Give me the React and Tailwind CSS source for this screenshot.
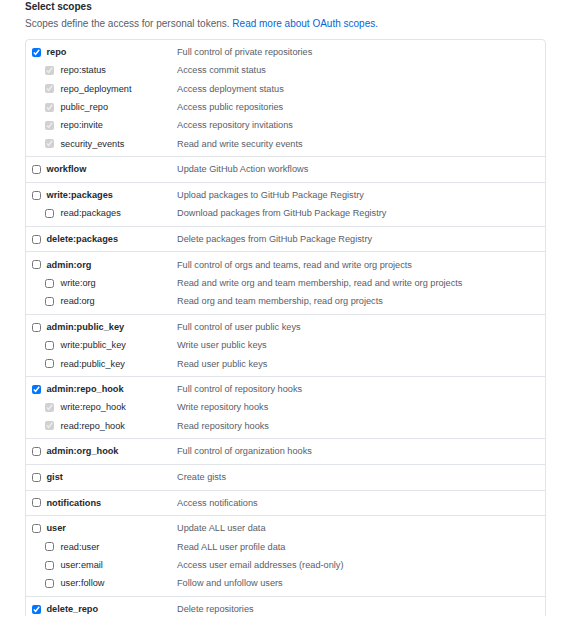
import React from "react";

const groups = [
  {
    main: { name: "repo", desc: "Full control of private repositories", checked: true },
    subs: [
      { name: "repo:status", desc: "Access commit status" },
      { name: "repo_deployment", desc: "Access deployment status" },
      { name: "public_repo", desc: "Access public repositories" },
      { name: "repo:invite", desc: "Access repository invitations" },
      { name: "security_events", desc: "Read and write security events" },
    ],
  },
  { main: { name: "workflow", desc: "Update GitHub Action workflows" }, subs: [] },
  {
    main: { name: "write:packages", desc: "Upload packages to GitHub Package Registry" },
    subs: [{ name: "read:packages", desc: "Download packages from GitHub Package Registry" }],
  },
  { main: { name: "delete:packages", desc: "Delete packages from GitHub Package Registry" }, subs: [] },
  {
    main: { name: "admin:org", desc: "Full control of orgs and teams, read and write org projects" },
    subs: [
      { name: "write:org", desc: "Read and write org and team membership, read and write org projects" },
      { name: "read:org", desc: "Read org and team membership, read org projects" },
    ],
  },
  {
    main: { name: "admin:public_key", desc: "Full control of user public keys" },
    subs: [
      { name: "write:public_key", desc: "Write user public keys" },
      { name: "read:public_key", desc: "Read user public keys" },
    ],
  },
  {
    main: { name: "admin:repo_hook", desc: "Full control of repository hooks", checked: true },
    subs: [
      { name: "write:repo_hook", desc: "Write repository hooks" },
      { name: "read:repo_hook", desc: "Read repository hooks" },
    ],
  },
  { main: { name: "admin:org_hook", desc: "Full control of organization hooks" }, subs: [] },
  { main: { name: "gist", desc: "Create gists" }, subs: [] },
  { main: { name: "notifications", desc: "Access notifications" }, subs: [] },
  {
    main: { name: "user", desc: "Update ALL user data" },
    subs: [
      { name: "read:user", desc: "Read ALL user profile data" },
      { name: "user:email", desc: "Access user email addresses (read-only)" },
      { name: "user:follow", desc: "Follow and unfollow users" },
    ],
  },
  { main: { name: "delete_repo", desc: "Delete repositories", checked: true }, subs: [] },
];

function Row({ item, sub, parentChecked }) {
  const checked = sub ? parentChecked : !!item.checked;
  return (
    <div className="flex items-center h-[18.3px]">
      <div className={`flex items-center w-[151px] shrink-0 ${sub ? "pl-[19px]" : "pl-[6px]"}`}>
        <input
          type="checkbox"
          defaultChecked={checked}
          disabled={sub && parentChecked}
          className={`w-[9px] h-[9px] m-0 shrink-0 ${sub ? "mr-[6.5px]" : "mr-[5.5px]"}`}
        />
        <span className={sub ? "text-[#24292e]" : "font-bold text-[#24292e]"}>{item.name}</span>
      </div>
      <div className="text-[#586069] whitespace-nowrap">{item.desc}</div>
    </div>
  );
}

export default function App() {
  return (
    <div className="bg-white w-[577px] h-[634px] font-['Liberation_Sans',Arial,sans-serif]">
      <div className="h-[616px] overflow-hidden pl-[25px]">
        <div className="text-[10px] font-bold text-[#24292e] leading-[14px]">Select scopes</div>
        <div className="text-[10px] text-[#586069] leading-[14px] mt-[3px]">
          Scopes define the access for personal tokens.{" "}
          <span className="text-[#0366d6]">Read more about OAuth scopes.</span>
        </div>
        <div className="mt-[8px] w-[521px] border border-[#e1e4e8] rounded-[4px] text-[9.2px] leading-[18.3px]">
          {groups.map((g, i) => (
            <div key={i} className={`py-[3.2px] ${i > 0 ? "border-t border-[#e1e4e8]" : ""}`}>
              <Row item={g.main} />
              {g.subs.map((s) => (
                <Row key={s.name} item={s} sub parentChecked={!!g.main.checked} />
              ))}
            </div>
          ))}
        </div>
      </div>
    </div>
  );
}
